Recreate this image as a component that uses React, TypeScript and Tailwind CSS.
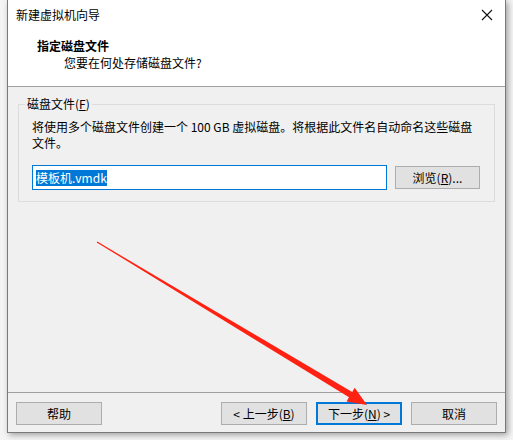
import React from "react";

const font = { fontFamily: '"Noto Sans CJK SC", "Noto Sans", sans-serif' };

function Btn({ children, primary = false }: { children: React.ReactNode; primary?: boolean }) {
  return (
    <button
      className={
        primary
          ? "w-[86px] h-[23px] bg-[#e1e1e1] border-2 border-[#0078d7] text-[12px] leading-none text-black flex items-center justify-center"
          : "w-[86px] h-[23px] bg-[#e1e1e1] border border-[#adadad] text-[12px] leading-none text-black flex items-center justify-center"
      }
    >
      {children}
    </button>
  );
}

export default function App() {
  return (
    <div className="relative w-[513px] h-[440px] bg-[#f4f4f4] overflow-hidden" style={font}>
      <div className="absolute left-[7px] top-0 w-[499px] h-[433px] border border-t-0 border-[#7a7a7a] bg-[#f0f0f0] flex flex-col shadow-[2px_2px_6px_rgba(0,0,0,0.35)]">
        {/* title bar + header */}
        <div className="bg-white h-[87px] border-b border-[#a0a0a0] flex flex-col">
          <div className="h-[30px] flex items-center justify-between pl-[8px] pr-[10px]">
            <span className="text-[12px] text-black">新建虚拟机向导</span>
            <svg width="12" height="12" viewBox="0 0 12 12" className="mr-[2px]">
              <path d="M1 1 L11 11 M11 1 L1 11" stroke="#111" strokeWidth="1.1" />
            </svg>
          </div>
          <div className="pl-[29px] pt-[7px] text-[12px] leading-[17px] font-bold text-black">指定磁盘文件</div>
          <div className="pl-[56px] text-[12px] leading-[17px] text-black">您要在何处存储磁盘文件?</div>
        </div>

        {/* body */}
        <div className="flex-1 px-[10px] pt-[9px]">
          <fieldset className="border border-[#dcdcdc] px-[13px] pb-[11px]">
            <legend className="-ml-[7px] px-[2px] text-[12px] leading-[16px] text-black">
              磁盘文件(<span className="underline">F</span>)
            </legend>
            <div className="pt-[7px] text-[12px] leading-[16px] text-black">
              将使用多个磁盘文件创建一个 100 GB 虚拟磁盘。将根据此文件名自动命名这些磁盘
              <br />
              文件。
            </div>
            <div className="mt-[14px] flex items-center">
              <div className="w-[355px] h-[25px] border border-[#0078d7] bg-white flex items-center px-[3px]">
                <span className="bg-[#0078d7] text-white text-[12px] leading-[16px]">模板机.vmdk</span>
              </div>
              <div className="ml-[8px]">
                <button className="w-[85px] h-[23px] bg-[#e1e1e1] border border-[#adadad] text-[12px] leading-none text-black flex items-center justify-center">
                  浏览(<span className="underline">R</span>)...
                </button>
              </div>
            </div>
          </fieldset>
        </div>

        {/* footer */}
        <div className="h-[40px] border-t border-[#a0a0a0] flex items-start pt-[9px] px-[8px]">
          <Btn>帮助</Btn>
          <div className="flex-1" />
          <div className="flex gap-[9px]">
            <Btn>&lt; 上一步(<span className="underline">B</span>)</Btn>
            <Btn primary>
              下一步(<span className="underline">N</span>) &gt;
            </Btn>
            <Btn>取消</Btn>
          </div>
        </div>
      </div>

      {/* annotation arrow */}
      <svg className="absolute left-0 top-0 pointer-events-none" width="513" height="440" viewBox="0 0 513 440">
        <polygon
          points="96.7,242.4 349,397.3 346.5,401.6 367,405 354.7,387.8 352.2,392.1 97.3,241.6"
          fill="#ff2212"
        />
      </svg>
    </div>
  );
}
